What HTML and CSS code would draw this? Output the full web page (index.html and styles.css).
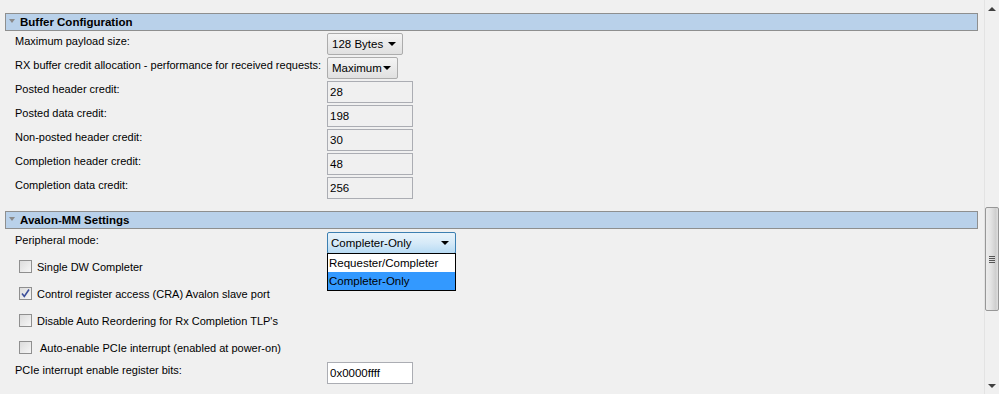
FILE: index.html
```html
<!DOCTYPE html>
<html>
<head>
<meta charset="utf-8">
<link rel="stylesheet" href="styles.css">
</head>
<body>
<div class="window">
  <div class="content">
    <div class="section-header"><span class="tri"></span>Buffer Configuration</div>
    <div class="rows first">
      <div class="row"><div class="label">Maximum payload size:</div><div class="combo w76"><span>128 Bytes</span><span class="arrow"></span></div></div>
      <div class="row"><div class="label">RX buffer credit allocation - performance for received requests:</div><div class="combo w71"><span>Maximum</span><span class="arrow"></span></div></div>
      <div class="row"><div class="label">Posted header credit:</div><div class="field">28</div></div>
      <div class="row"><div class="label">Posted data credit:</div><div class="field">198</div></div>
      <div class="row"><div class="label">Non-posted header credit:</div><div class="field">30</div></div>
      <div class="row"><div class="label">Completion header credit:</div><div class="field">48</div></div>
      <div class="row"><div class="label">Completion data credit:</div><div class="field">256</div></div>
    </div>
    <div class="section-header second"><span class="tri"></span>Avalon-MM Settings</div>
    <div class="rows">
      <div class="row periph"><div class="label">Peripheral mode:</div>
        <div class="combo-wrap">
          <div class="combo focus w129"><span>Completer-Only</span><span class="arrow"></span></div>
          <div class="popup">
            <div class="item">Requester/Completer</div>
            <div class="item sel">Completer-Only</div>
          </div>
        </div>
      </div>
      <div class="check-row"><span class="box"></span><span class="ctext">Single DW Completer</span></div>
      <div class="check-row"><span class="box checked"><svg width="11" height="11" viewBox="0 0 11 11"><path d="M2 5.5 L4.3 8.5 L9 1.5" fill="none" stroke="#3c4f9a" stroke-width="1.6"/></svg></span><span class="ctext">Control register access (CRA) Avalon slave port</span></div>
      <div class="check-row"><span class="box"></span><span class="ctext">Disable Auto Reordering for Rx Completion TLP's</span></div>
      <div class="check-row"><span class="box"></span><span class="ctext pad">Auto-enable PCIe interrupt (enabled at power-on)</span></div>
      <div class="row last"><div class="label">PCIe interrupt enable register bits:</div><div class="field white">0x0000ffff</div></div>
    </div>
  </div>
  <div class="scrollbar">
    <span class="sarrow up"></span>
    <div class="track">
      <div class="thumb"><span class="grip"></span><span class="grip"></span><span class="grip"></span><span class="grip"></span></div>
    </div>
    <span class="sarrow down"></span>
  </div>
</div>
</body>
</html>
```

FILE: styles.css
```css
html, body {
  margin: 0;
  padding: 0;
}
body {
  background: #f0f0f0;
  font-family: "Liberation Sans", Arial, sans-serif;
  font-size: 11px;
  color: #000;
  width: 999px;
  height: 394px;
  overflow: hidden;
}
.window {
  display: flex;
  height: 394px;
}
.content {
  flex: 1;
  padding: 13px 6px 0 5px;
}
.section-header {
  box-sizing: border-box;
  height: 18px;
  background: #b9d1ea;
  border: 1px solid #8e8f8f;
  font-weight: bold;
  font-size: 11.5px;
  line-height: 16px;
  padding-left: 14px;
  position: relative;
  display: flex;
  align-items: center;
}
.section-header.second {
  margin-top: 12px;
}
.tri {
  position: absolute;
  left: 3px;
  top: 5px;
  width: 0;
  height: 0;
  border-left: 3px solid transparent;
  border-right: 3px solid transparent;
  border-top: 4px solid #8a8a8a;
}
.rows {
  padding-left: 10px;
}
.row {
  display: flex;
  height: 24px;
  align-items: flex-start;
}
.row .label {
  width: 312px;
  margin-top: 2px;
  line-height: 17px;
  white-space: nowrap;
}
.row > .combo, .row > .field, .row > .combo-wrap {
  margin-top: 2px;
}
.row.periph .label { margin-top: 3px; }
.row.periph > .combo-wrap { margin-top: 3px; }
.row.last .label { margin-top: 1px; }
.row.last > .field { margin-top: 1px; }
.combo {
  box-sizing: border-box;
  height: 22px;
  border: 1px solid #acacac;
  border-radius: 2px;
  background: linear-gradient(#f4f4f4, #e0e0e0);
  display: flex;
  align-items: center;
  justify-content: space-between;
  padding: 0 6px 0 4px;
  font-size: 11.5px;
}
.combo.focus {
  border-color: #3c7fb1;
  background: linear-gradient(#e8f3fb 0%, #d6eaf8 50%, #b7dbf4 100%);
  padding-left: 3px;
  padding-right: 6px;
}
.w76 { width: 76px; }
.w71 { width: 71px; }
.w129 { width: 129px; }
.arrow {
  width: 0;
  height: 0;
  border-left: 4px solid transparent;
  border-right: 4px solid transparent;
  border-top: 4px solid #000;
}
.combo-wrap {
  position: relative;
}
.popup {
  position: absolute;
  left: 0;
  top: 21px;
  width: 129px;
  box-sizing: border-box;
  border: 1px solid #000;
  background: #fff;
  z-index: 2;
  font-size: 11.5px;
}
.item {
  height: 18px;
  line-height: 18px;
  padding-left: 1px;
}
.item.sel {
  background: #3399ff;
}
.field {
  box-sizing: border-box;
  width: 86px;
  height: 22px;
  border: 1px solid #abadb3;
  background: #f0f0f0;
  line-height: 20px;
  padding-left: 2px;
  font-size: 11.5px;
}
.field.white {
  background: #fff;
}
.check-row {
  height: 27px;
  display: flex;
  align-items: center;
  padding-left: 4px;
}
.box {
  box-sizing: border-box;
  width: 13px;
  height: 13px;
  border: 1px solid #8f8f8f;
  background: linear-gradient(135deg, #dcdcdc, #f6f6f6);
  display: flex;
  align-items: center;
  justify-content: center;
}
.ctext {
  margin-left: 5px;
}
.ctext.pad {
  margin-left: 8px;
}
.scrollbar {
  width: 15px;
  box-sizing: border-box;
  border-left: 1px solid #e3e3e3;
  background: #f0f0f0;
  display: flex;
  flex-direction: column;
  align-items: center;
}
.sarrow {
  width: 0;
  height: 0;
  border-left: 4px solid transparent;
  border-right: 4px solid transparent;
}
.sarrow.up {
  margin-top: 7px;
  border-bottom: 4px solid #404040;
}
.sarrow.down {
  margin-bottom: 6px;
  border-top: 4px solid #404040;
}
.track {
  flex: 1;
  width: 100%;
  padding-top: 196px;
  box-sizing: border-box;
}
.thumb {
  box-sizing: border-box;
  width: 14px;
  height: 104px;
  border: 1px solid #979797;
  border-radius: 2px;
  background: linear-gradient(90deg, #ececec 0%, #e3e3e3 40%, #cfcfcf 80%, #dedede 100%);
  display: flex;
  flex-direction: column;
  align-items: center;
  justify-content: center;
  gap: 1px;
}
.grip {
  width: 6px;
  height: 1px;
  background: #555;
}
```
